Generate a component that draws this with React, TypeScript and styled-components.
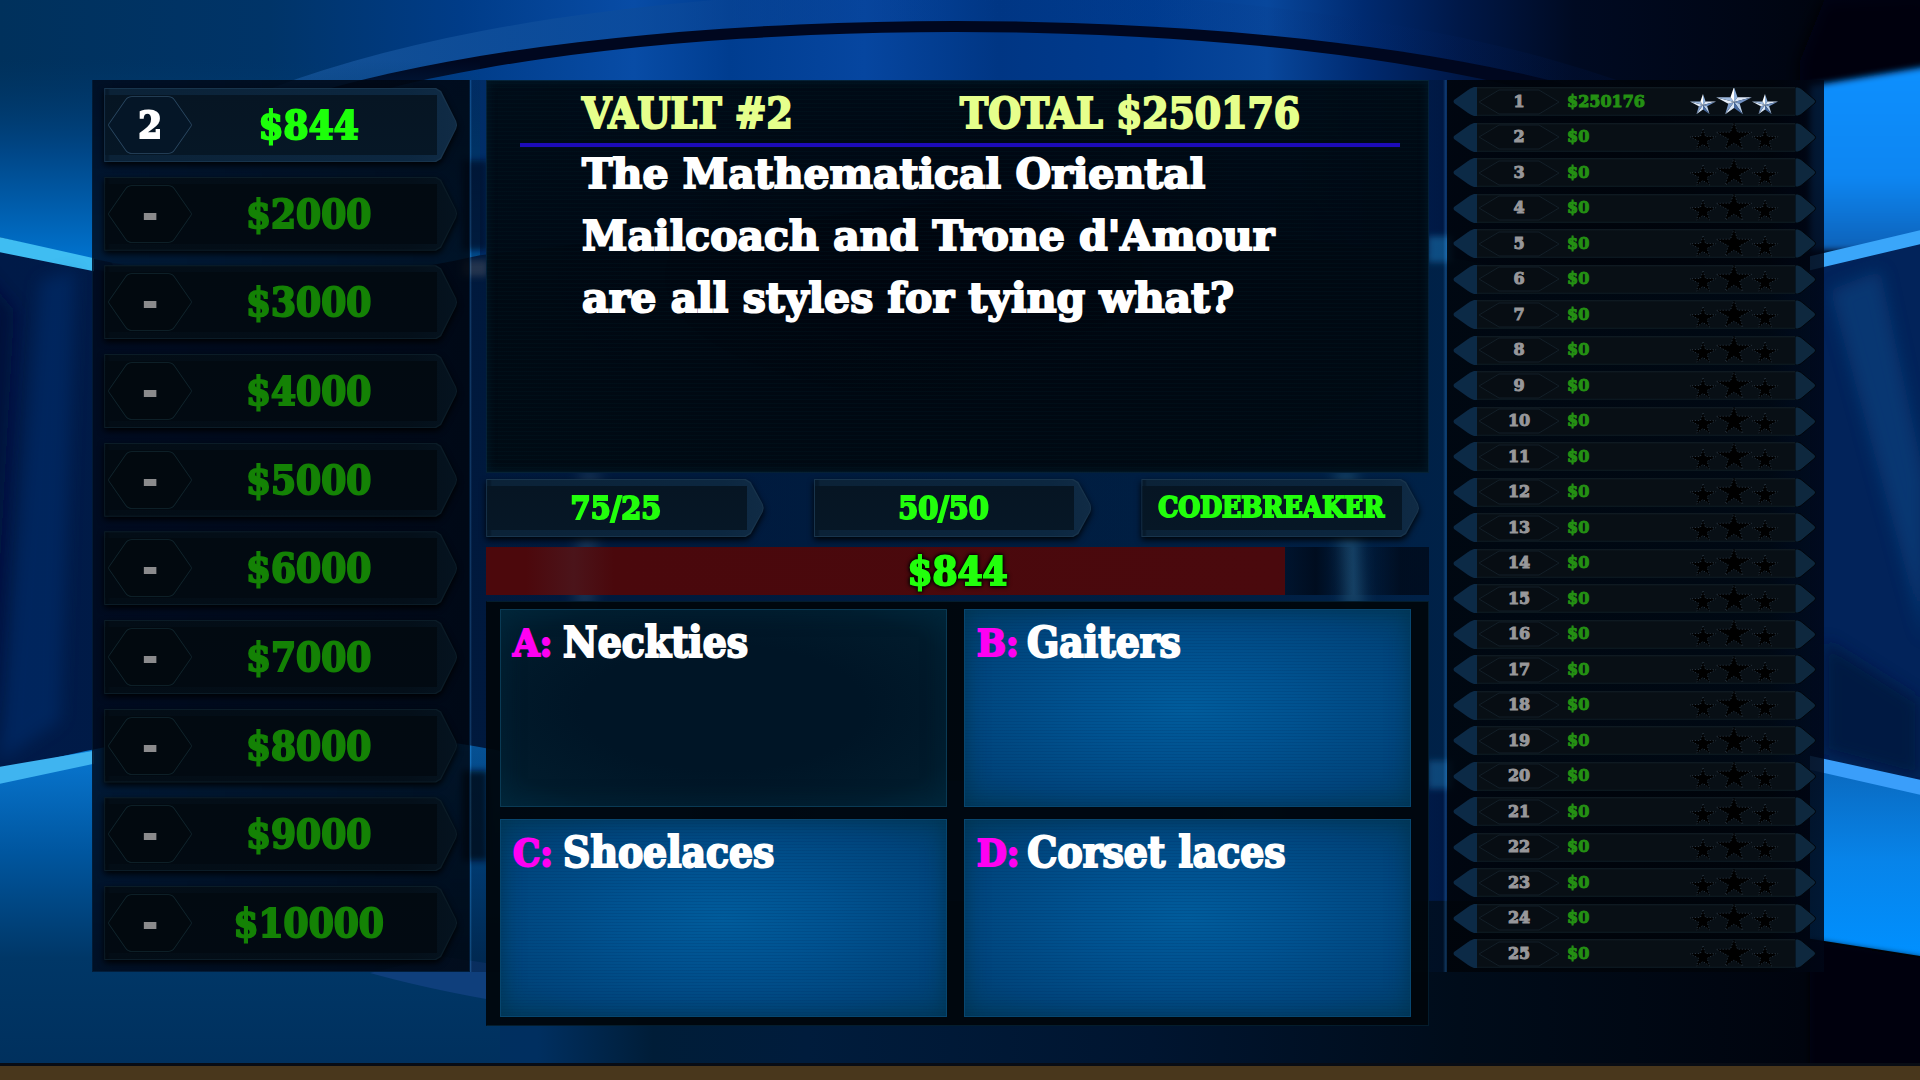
import React from "react";
import styled, { createGlobalStyle, css } from "styled-components";

const GlobalStyle = createGlobalStyle`
  *, *::before, *::after { box-sizing: border-box; }
  body {
    margin: 0;
    background: #000814;
    font-family: "DejaVu Serif Condensed", "DejaVu Serif", serif;
    font-weight: 700;
  }
  ol, h1, h2, p { margin: 0; padding: 0; font: inherit; }
  ol { list-style: none; }
  button { font: inherit; color: inherit; border: 0; cursor: pointer; }
`;

/* Thickens the slab letters for the big display lines */
const heavy = css`
  -webkit-text-stroke: 2px currentColor;
  paint-order: stroke fill;
`;

const Screen = styled.div`
  position: relative;
  min-height: 100vh;
  display: flex;
  flex-direction: column;
  isolation: isolate;
`;

const Backdrop = styled.svg`
  position: absolute;
  inset: 0;
  width: 100%;
  height: 100%;
  z-index: -1;
`;

const Stage = styled.main`
  flex: 1;
  display: grid;
  grid-template-columns: 378fr 977fr 377fr;
  align-items: start;
  padding: 80px 5% 37px 4.8%;
`;

const Floor = styled.footer`
  height: 18px;
  background: #49371c;
  border-top: 3px solid #080c14;
`;

const sidePanel = css`
  height: calc(100vh - 188px);
  min-height: 860px;
  display: flex;
  flex-direction: column;
  justify-content: space-between;
`;

/* Prize ladder */

const Ladder = styled.ol`
  ${sidePanel}
  padding: 8px 12px 11px 11px;
  background: linear-gradient(90deg, rgba(0, 9, 26, 0.84), rgba(0, 6, 16, 0.88));
  border: 1px solid rgba(4, 38, 74, 0.6);
  border-top: 0;
`;

const plate = css<{ $lit: boolean; $tip: number }>`
  position: relative;
  isolation: isolate;
  filter: drop-shadow(0 3px 3px rgba(0, 0, 0, 0.9));

  &::before,
  &::after {
    content: "";
    position: absolute;
    z-index: -1;
    clip-path: polygon(
      0 0,
      calc(100% - ${(p) => p.$tip}px) 0,
      calc(100% - ${(p) => p.$tip - 5}px) 3px,
      calc(100% - 1px) calc(50% - 4px),
      100% 50%,
      calc(100% - 1px) calc(50% + 4px),
      calc(100% - ${(p) => p.$tip - 5}px) calc(100% - 3px),
      calc(100% - ${(p) => p.$tip}px) 100%,
      0 100%
    );
  }
  &::before {
    inset: 0;
    background: ${(p) => (p.$lit ? "#18344c" : "#0b1c27")};
  }
  &::after {
    inset: 1px;
    background:
      linear-gradient(${(p) => (p.$lit ? "#061523, #061726" : "#020a11, #020a12")}) 0 6px /
        calc(100% - ${(p) => p.$tip - 2}px) calc(100% - 12px) no-repeat,
      ${(p) =>
        p.$lit
          ? "linear-gradient(90deg, #071a2c 3px, #0b2237 5px, #0c2740 86%, #102b45)"
          : "linear-gradient(90deg, #020a12 3px, #030d16 5px, #040f19 86%, #05131f)"};
  }
`;

const Rung = styled.li<{ $lit: boolean; $tip: number }>`
  ${plate}
  height: 74px;
  display: grid;
  grid-template-columns: 84px 1fr;
  align-items: center;
  padding: 7px 20px 7px 4px;
`;

const RungPosition = styled.span<{ $lit: boolean }>`
  ${heavy}
  position: relative;
  height: 58px;
  display: grid;
  place-items: center;
  font-size: 38px;
  line-height: 58px;
  color: ${(p) => (p.$lit ? "#ffffff" : "#8b8b8d")};
`;

const HexOutline = styled.svg`
  position: absolute;
  inset: 0;
  width: 100%;
  height: 100%;
`;

const RungNumber = styled.span`
  position: relative;
`;

const RungPrize = styled.span<{ $lit: boolean }>`
  ${heavy}
  padding-right: 12px;
  text-align: center;
  font-size: 40px;
  line-height: 58px;
  color: ${(p) => (p.$lit ? "#1dff0a" : "#148205")};
`;

/* Centre column */

const Centre = styled.section`
  min-width: 0;
  padding: 0 18px 0 16px;
  background: linear-gradient(
      90deg,
      rgba(60, 130, 190, 0.35) 0,
      rgba(0, 20, 50, 0.4) 2px,
      rgba(0, 20, 50, 0.4) calc(100% - 4px),
      rgba(30, 90, 150, 0.55) calc(100% - 1px),
      rgba(30, 90, 150, 0.2) 100%
    )
    0 0 / 100% calc(100vh - 188px) no-repeat;
`;

const QuestionPanel = styled.div`
  min-height: 393px;
  padding: 0 28px 0 33px;
  border: 1px solid rgba(10, 60, 95, 0.45);
  background:
    repeating-linear-gradient(0deg, rgba(0, 24, 34, 0.3) 0 1px, transparent 1px 4px),
    radial-gradient(ellipse at center, rgba(0, 5, 13, 0.95) 20%, rgba(0, 10, 18, 0.93));
  box-shadow: inset 0 0 8px 1px rgba(0, 34, 52, 0.6);
`;

const Heading = styled.header`
  ${heavy}
  height: 66px;
  display: grid;
  grid-template-columns: 378fr 440fr;
  align-items: center;
  padding: 4px 0 0 62px;
  border-bottom: 4px solid #1d0bb8;
  font-size: 42px;
  line-height: 56px;
  color: #e6ff8c;
`;

const Question = styled.p`
  ${heavy}
  margin-top: -4px;
  padding-left: 62px;
  font-family: "DejaVu Serif", serif;
  font-size: 41px;
  line-height: 62px;
  color: #ffffff;
  white-space: pre-line;
`;

const Lifelines = styled.div`
  display: grid;
  grid-template-columns: repeat(3, 277fr);
  gap: 50px;
  padding: 6px 10px 10px 0;
`;

const Lifeline = styled.button<{ $lit: boolean; $tip: number; $small?: boolean }>`
  ${plate}
  height: 58px;
  padding: 0 18px 0 0;
  background: transparent;
  text-align: center;
  font-size: ${(p) => (p.$small ? 28 : 32)}px;
  line-height: 58px;
  color: #22ff0c;
  white-space: nowrap;
  -webkit-text-stroke: 2px currentColor;
`;

const Timer = styled.div`
  height: 48px;
  display: grid;
  background: linear-gradient(90deg, transparent 80%, rgba(0, 6, 18, 0.75) 88%, transparent 92%, rgba(0, 6, 18, 0.7) 97%);
`;

const TimerFill = styled.div`
  grid-area: 1 / 1;
  background: linear-gradient(90deg, #4c080c 5%, #4b141a 11%, #4a080c 16%, #4a090d);
`;

const TimerValue = styled.span`
  ${heavy}
  grid-area: 1 / 1;
  text-align: center;
  font-size: 40px;
  line-height: 48px;
  color: #22ff0c;
  filter: drop-shadow(0 0 2px #000) drop-shadow(0 0 1px #000);
`;

const Answers = styled.div`
  margin-top: 6px;
  display: grid;
  grid-template-columns: 1fr 1fr;
  gap: 12px 17px;
  padding: 7px 17px 8px 13px;
  background: rgba(0, 6, 12, 0.94);
  border: 1px solid rgba(8, 44, 66, 0.6);
  border-left-color: transparent;
`;

const Answer = styled.button<{ $picked: boolean }>`
  height: 198px;
  display: flex;
  align-items: flex-start;
  gap: 8px;
  padding: 5px 12px;
  text-align: left;
  font-size: 42px;
  line-height: 56px;
  border: 1px solid ${(p) => (p.$picked ? "#0a3a54" : "#07466f")};
  background: ${(p) =>
    p.$picked
      ? "radial-gradient(ellipse at center, #001526 45%, #011b2c 80%, #012539)"
      : "repeating-linear-gradient(0deg, rgba(0, 40, 90, 0.16) 0 1px, transparent 1px 3px), radial-gradient(ellipse at center, #005c9c 0%, #005290 35%, #00457c 75%, #003e68)"};
  box-shadow: inset 0 0 22px ${(p) => (p.$picked ? "rgba(0, 40, 60, 0.6)" : "rgba(0, 48, 72, 0.75)")};
`;

const Letter = styled.span`
  min-width: 42px;
  color: #ff00f2;
  font-size: 38px;
  -webkit-text-stroke: 2px currentColor;
`;

const AnswerText = styled.span`
  ${heavy}
  color: #ffffff;
`;

/* Vault list */

const VaultList = styled.ol`
  ${sidePanel}
  padding: 7px 7px 4px 6px;
  background: linear-gradient(90deg, rgba(0, 4, 10, 0.9) 85%, rgba(0, 6, 22, 0.86));
`;

const VaultRow = styled.li`
  height: 29px;
  display: grid;
  grid-template-columns: 24px 84px 1fr 92px 15px 22px;
  align-items: center;
  font-family: "DejaVu Serif", serif;
  font-size: 16px;
  line-height: 28px;
  -webkit-text-stroke: 1px currentColor;
  background: linear-gradient(#111d25, #080f15 2px, #080f15 27px, #0c1a22) 24px 0 / calc(100% - 46px) 100% no-repeat;
`;

const RowArrow = styled.svg<{ $end?: boolean }>`
  width: 100%;
  height: 29px;
  grid-column: ${(p) => (p.$end ? 6 : 1)};
`;

const VaultNumber = styled.span`
  position: relative;
  height: 28px;
  text-align: center;
  color: #97979a;
`;

const VaultTotal = styled.span`
  padding-left: 6px;
  color: #249013;
`;

const Stars = styled.svg`
  width: 92px;
  height: 28px;
`;

const prizes = ["$844", "$2000", "$3000", "$4000", "$5000", "$6000", "$7000", "$8000", "$9000", "$10000"];

const vaults = Array.from({ length: 25 }, (_, i) => ({
  number: i + 1,
  total: i === 0 ? "$250176" : "$0",
  won: i === 0,
}));

const answers = [
  { letter: "A:", text: "Neckties", picked: true },
  { letter: "B:", text: "Gaiters", picked: false },
  { letter: "C:", text: "Shoelaces", picked: false },
  { letter: "D:", text: "Corset laces", picked: false },
];

const timeLeft = 84.7;

/** Corner points of a five-pointed star with wide arms, tip first, alternating outer and inner. */
function starPoints(cx: number, cy: number, r: number) {
  return Array.from({ length: 10 }, (_, i) => {
    const radius = i % 2 === 0 ? r : r * 0.4;
    const angle = -Math.PI / 2 + (i * Math.PI) / 5;
    const reach = i === 2 || i === 8 ? 1.25 : 1;
    return [cx + reach * radius * Math.cos(angle), cy + radius * Math.sin(angle)];
  });
}

function Star({ cx, cy, r, won }: { cx: number; cy: number; r: number; won: boolean }) {
  const pts = starPoints(cx, cy, r);
  if (!won) {
    return (
      <polygon
        points={pts.map((p) => p.join(",")).join(" ")}
        fill="#000"
        stroke="#2b3946"
        strokeWidth="1"
        strokeDasharray="1 2"
      />
    );
  }
  const shades = ["#8fb0da", "#dfeaf8", "#6f8fc0", "#b9cfea", "#486a9f", "#dce8f6", "#7e9cc9", "#e4edf9", "#9db9de", "#ffffff"];
  return (
    <g>
      {pts.map((p, i) => {
        const next = pts[(i + 1) % 10];
        return <polygon key={i} points={`${cx},${cy} ${p.join(",")} ${next.join(",")}`} fill={shades[i]} />;
      })}
    </g>
  );
}

function StarRow({ won }: { won: boolean }) {
  return (
    <Stars viewBox="0 0 92 28" role="img" aria-label={won ? "3 stars" : "0 stars"}>
      <Star cx={15} cy={17} r={11} won={won} />
      <Star cx={46} cy={14} r={15} won={won} />
      <Star cx={77} cy={17} r={11} won={won} />
    </Stars>
  );
}

function Hexagon({ lit }: { lit: boolean }) {
  return (
    <HexOutline viewBox="0 0 84 58" preserveAspectRatio="none" aria-hidden="true">
      <path
        d="M24 1 H60 Q64 1 66 4 L82 27 Q84 29 82 31 L66 54 Q64 57 60 57 H24 Q20 57 18 54 L2 31 Q0 29 2 27 L18 4 Q20 1 24 1 Z"
        fill={lit ? "#051627" : "#02090f"}
        stroke={lit ? "#2c4a64" : "#12272f"}
        strokeWidth="1.5"
      />
    </HexOutline>
  );
}

function StudioBackdrop() {
  return (
    <Backdrop viewBox="0 0 1920 1080" preserveAspectRatio="none" aria-hidden="true">
      <defs>
        <linearGradient id="sky" gradientUnits="userSpaceOnUse" x1="0" x2="1920" y1="0" y2="0">
          <stop offset="0" stopColor="#00315c" />
          <stop offset="0.14" stopColor="#003468" />
          <stop offset="0.24" stopColor="#003c88" />
          <stop offset="0.33" stopColor="#084ca6" />
          <stop offset="0.38" stopColor="#003d90" />
          <stop offset="0.45" stopColor="#0646a0" />
          <stop offset="0.52" stopColor="#003684" />
          <stop offset="0.6" stopColor="#003c90" />
          <stop offset="0.66" stopColor="#08479c" />
          <stop offset="0.71" stopColor="#002a70" />
          <stop offset="0.76" stopColor="#001848" />
          <stop offset="0.82" stopColor="#000a22" />
          <stop offset="1" stopColor="#000208" />
        </linearGradient>
        <linearGradient id="leftTop" x1="0" x2="0" y1="0" y2="1">
          <stop offset="0" stopColor="#003a6c" stopOpacity="0" />
          <stop offset="0.4" stopColor="#004788" />
          <stop offset="1" stopColor="#0080e4" />
        </linearGradient>
        <linearGradient id="leftBottom" x1="0" x2="0" y1="0" y2="1">
          <stop offset="0" stopColor="#0a7edc" />
          <stop offset="0.35" stopColor="#00569f" />
          <stop offset="0.65" stopColor="#003767" />
          <stop offset="1" stopColor="#002f5c" />
        </linearGradient>
        <linearGradient id="rightBlue" x1="0" x2="0" y1="0" y2="1">
          <stop offset="0" stopColor="#0a90ff" />
          <stop offset="0.6" stopColor="#0a86f2" />
          <stop offset="1" stopColor="#0a62b8" />
        </linearGradient>
        <linearGradient id="rightBlueLow" x1="0" x2="0" y1="0" y2="1">
          <stop offset="0" stopColor="#0a6ac0" />
          <stop offset="0.5" stopColor="#0784ea" />
          <stop offset="1" stopColor="#0090ff" />
        </linearGradient>
        <linearGradient id="wall" x1="0" x2="1" y1="0" y2="0">
          <stop offset="0" stopColor="#001a48" />
          <stop offset="0.25" stopColor="#001c44" />
          <stop offset="0.5" stopColor="#002248" />
          <stop offset="0.74" stopColor="#002a55" />
          <stop offset="0.95" stopColor="#01366e" />
          <stop offset="1" stopColor="#001c50" />
        </linearGradient>
        <linearGradient id="floor" gradientUnits="userSpaceOnUse" x1="0" x2="1920" y1="0" y2="0">
          <stop offset="0" stopColor="#002f5c" />
          <stop offset="0.28" stopColor="#002f60" />
          <stop offset="0.34" stopColor="#001d38" />
          <stop offset="0.42" stopColor="#001c3c" />
          <stop offset="0.6" stopColor="#001530" />
          <stop offset="0.76" stopColor="#000c1a" />
          <stop offset="0.94" stopColor="#00040e" />
          <stop offset="1" stopColor="#000106" />
        </linearGradient>
        <linearGradient id="rim" x1="0" x2="1" y1="0" y2="0">
          <stop offset="0" stopColor="#1a5694" />
          <stop offset="0.3" stopColor="#0c4c9c" stopOpacity="0.8" />
          <stop offset="0.5" stopColor="#0a3c8c" stopOpacity="0" />
          <stop offset="1" stopColor="#001450" stopOpacity="0.2" />
        </linearGradient>
        <filter id="soft" filterUnits="userSpaceOnUse" x="-100" y="-100" width="2120" height="1280">
          <feGaussianBlur stdDeviation="8" />
        </filter>
        <filter id="edge" filterUnits="userSpaceOnUse" x="-100" y="-100" width="2120" height="1280">
          <feGaussianBlur stdDeviation="3" />
        </filter>
      </defs>
      <rect width="1920" height="1080" fill="url(#sky)" />
      <rect y="900" width="1920" height="180" fill="url(#floor)" />

      {/* Rim of the ceiling ring */}
      <ellipse cx="955" cy="232" rx="850" ry="242" fill="url(#rim)" />
      <ellipse cx="955" cy="200" rx="800" ry="179" fill="#00071f" />
      <ellipse cx="955" cy="190" rx="740" ry="158" fill="url(#sky)" />

      {/* Curved wall behind the panels */}
      <path d="M0 60 H480 V290 Q240 300 0 237 Z" fill="url(#leftTop)" />
      <path d="M0 250 Q240 310 480 255 L960 200 L1440 255 Q1680 310 1920 250 V780 H0 Z" fill="url(#wall)" />
      <path d="M0 237 L94 258 V271 L0 252 Z" fill="#3fbdf2" />
      <path d="M40 280 L75 270 L60 720 L0 760 Z" fill="#013a86" opacity="0.35" filter="url(#soft)" />
      <path d="M-20 270 L14 310 L-10 740 Z" fill="#000f38" opacity="0.8" filter="url(#soft)" />
      <path d="M462 260 h26 v16 h-26 z" fill="#3a4a60" filter="url(#edge)" />
      <path d="M1428 236 h24 v26 h-24 z" fill="#1672b8" filter="url(#edge)" />
      <path d="M462 160 h26 v90 h-26 z" fill="#000c28" opacity="0.8" filter="url(#edge)" />

      {/* Lower ring */}
      <path d="M0 772 Q240 700 500 750 V1080 H0 Z" fill="url(#leftBottom)" />
      <path d="M0 766 L94 750 V763 L0 783 Z" fill="#3fb4f0" />
      <path d="M370 972 L440 955 L486 962 V998 Q420 986 370 972 Z" fill="#0f3f7c" />
      <path d="M462 770 h26 v90 h-26 z" fill="#000818" opacity="0.9" filter="url(#edge)" />
      <path d="M1428 760 h24 v28 h-24 z" fill="#1268a8" filter="url(#edge)" />

      {/* Bright screens at the right */}
      <path d="M1824 0 H1930 V260 H1800 V60 Z" fill="#000208" filter="url(#soft)" />
      <path d="M1810 86 L1930 66 V250 H1810 Z" fill="url(#rightBlue)" filter="url(#edge)" />
      <path d="M1810 256 L1920 230 V300 H1810 Z" fill="#3aa6fa" />
      <path d="M1810 270 L1920 244 V780 H1810 Z" fill="#02235a" />
      <path d="M1830 290 L1880 270 L1925 480 V640 Z" fill="#0a4482" opacity="0.6" filter="url(#soft)" />
      <path d="M1824 640 L1920 700 V778 L1824 752 Z" fill="#001238" opacity="0.7" filter="url(#soft)" />
      <path d="M1810 768 L1920 790 V955 L1810 938 Z" fill="url(#rightBlueLow)" />
      <path d="M1810 755 L1920 779 V794 L1810 769 Z" fill="#3a9efa" />
      <path d="M1810 940 L1940 960 V1100 H1810 Z" fill="#00030b" filter="url(#edge)" />

      {/* Light shafts */}
      <path d="M590 470 L584 610" stroke="#5a86a4" strokeWidth="16" opacity="0.5" filter="url(#soft)" />
      <path d="M1345 470 L1354 610" stroke="#4a9ac0" strokeWidth="18" opacity="0.6" filter="url(#soft)" />
    </Backdrop>
  );
}

export default function App() {
  return (
    <>
      <GlobalStyle />
      <Screen>
        <StudioBackdrop />
        <Stage>
          <Ladder aria-label="Prize ladder">
            {prizes.map((prize, i) => {
              const lit = i === 0;
              return (
                <Rung key={prize} $lit={lit} $tip={21}>
                  <RungPosition $lit={lit}>
                    <Hexagon lit={lit} />
                    <RungNumber>{lit ? "2" : "-"}</RungNumber>
                  </RungPosition>
                  <RungPrize $lit={lit}>{prize}</RungPrize>
                </Rung>
              );
            })}
          </Ladder>

          <Centre>
            <QuestionPanel>
              <Heading>
                <h1>VAULT #2</h1>
                <h2>TOTAL $250176</h2>
              </Heading>
              <Question>{"The Mathematical Oriental\nMailcoach and Trone d'Amour\nare all styles for tying what?"}</Question>
            </QuestionPanel>

            <Lifelines>
              <Lifeline type="button" $lit $tip={18}>75/25</Lifeline>
              <Lifeline type="button" $lit $tip={18}>50/50</Lifeline>
              <Lifeline type="button" $lit $tip={18} $small>CODEBREAKER</Lifeline>
            </Lifelines>

            <Timer role="progressbar" aria-label="Prize remaining" aria-valuenow={timeLeft}>
              <TimerFill style={{ width: `${timeLeft}%` }} />
              <TimerValue>$844</TimerValue>
            </Timer>

            <Answers>
              {answers.map((a) => (
                <Answer key={a.letter} type="button" $picked={a.picked}>
                  <Letter>{a.letter}</Letter>
                  <AnswerText>{a.text}</AnswerText>
                </Answer>
              ))}
            </Answers>
          </Centre>

          <VaultList aria-label="Vaults">
            {vaults.map((v) => (
              <VaultRow key={v.number}>
                <RowArrow viewBox="0 0 24 29" preserveAspectRatio="none" aria-hidden="true">
                  <path d="M24 0 H21 Q18 1 15 3 L1 13 Q0 14 1 16 L15 26 Q18 28 21 29 H24 Z" fill="#0c2a46" />
                </RowArrow>
                <VaultNumber>
                  <HexOutline viewBox="0 0 84 28" preserveAspectRatio="none" aria-hidden="true">
                    <path
                      d="M22 2 H62 L82 14 L62 26 H22 L2 14 Z"
                      fill="#070d13"
                      stroke="#131f28"
                      strokeLinejoin="round"
                    />
                  </HexOutline>
                  <RungNumber>{v.number}</RungNumber>
                </VaultNumber>
                <VaultTotal>{v.total}</VaultTotal>
                <StarRow won={v.won} />
                <RowArrow $end viewBox="0 0 22 29" preserveAspectRatio="none" aria-hidden="true">
                  <path
                    d="M0 0 H3 Q6 1 8 3 L20 13 Q21 14 20 16 L8 26 Q6 28 3 29 H0 Z"
                    fill="#0e283e"
                    stroke="#01060c"
                  />
                </RowArrow>
              </VaultRow>
            ))}
          </VaultList>
        </Stage>
        <Floor />
      </Screen>
    </>
  );
}
